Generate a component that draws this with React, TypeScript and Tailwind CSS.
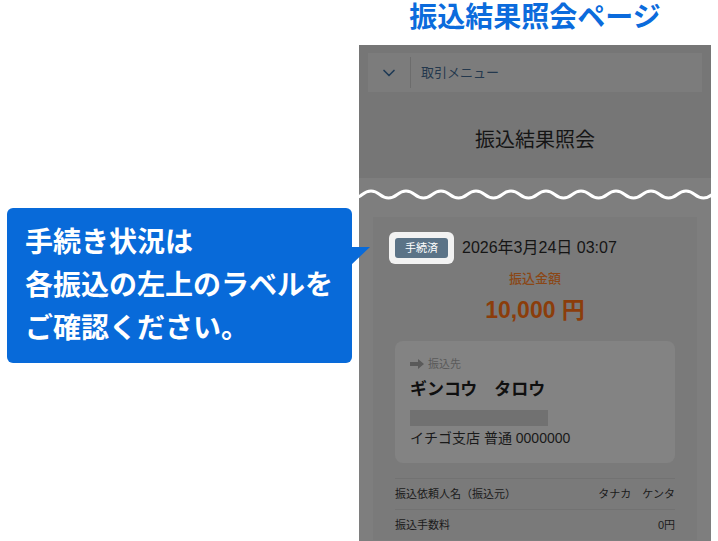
import { ChevronDown } from 'lucide-react'

const FONT = "font-['Liberation_Sans','Noto_Sans_CJK_JP',sans-serif]"

// smooth sine-like line used to mark the cut between header and body
function WaveLine() {
  const half = 17.5
  let d = `M ${12 - 35} 3`
  for (let x = 12 - 35, up = true; x < 360; x += half, up = !up) {
    const y0 = up ? 3 : 10
    const y1 = up ? 10 : 3
    d += ` C ${x + half / 2} ${y0} ${x + half / 2} ${y1} ${x + half} ${y1}`
  }
  return (
    <svg width="352" height="13" viewBox="0 0 352 13" className="block">
      <path d={d} fill="none" stroke="#ffffff" strokeWidth="3" />
    </svg>
  )
}

function ArrowIcon() {
  return (
    <svg width="14" height="10" viewBox="0 0 14 10" className="block">
      <path d="M0 3 H8 V0 L14 5 L8 10 V7 H0 Z" fill="#5a5a5a" />
    </svg>
  )
}

function Callout() {
  return (
    <div className="relative w-[345px] h-[155px] bg-[#086ad9] rounded-[6px] pl-[18px] pt-[13px] text-white text-[28px] leading-[43px] font-bold">
      <p>手続き状況は</p>
      <p>各振込の左上のラベルを</p>
      <p>ご確認ください。</p>
      <svg width="20" height="19" viewBox="0 0 20 19" className="absolute left-[344px] top-[39px]">
        <path d="M0 0 H19 L0 18 Z" fill="#086ad9" />
      </svg>
    </div>
  )
}

function ResultCard() {
  return (
    <div className="mx-[14px] bg-[#7a7a7a] px-[22px] pt-[15px]">
      <div className="flex items-center -ml-[6px]">
        <div className="bg-[#f2f2f2] rounded-[6px] p-[6px]">
          <span className="flex items-center justify-center w-[53px] h-[20px] rounded-[3px] bg-[#5b7387] text-white text-[11px]">
            手続済
          </span>
        </div>
        <span className="ml-[8px] text-[16px] text-[#151515]">2026年3月24日 03:07</span>
      </div>
      <p className="mt-[6px] text-center text-[13px] leading-[18px] font-medium text-[#8a4716]">振込金額</p>
      <p className="mt-[7px] text-center text-[23px] leading-[30px] font-bold text-[#8b3d0b]">10,000 円</p>

      <div className="mt-[16px] bg-[#838383] rounded-[8px] px-[15px] pt-[15px] pb-[15px]">
        <div className="flex items-center gap-[4px] h-[16px] text-[11px] text-[#5a5a5a]">
          <ArrowIcon />
          <span>振込先</span>
        </div>
        <p className="mt-[6px] text-[17px] leading-[24px] font-bold text-[#101010]">ギンコウ　タロウ</p>
        <div className="mt-[8px] w-[138px] h-[16px] bg-[#717171]" />
        <p className="mt-[2px] text-[14px] leading-[20px] text-[#1a1a1a]">イチゴ支店 普通 0000000</p>
      </div>

      <div className="mt-[15px] text-[11px] text-[#1a1a1a]">
        <div className="flex items-center justify-between h-[31px] border-t border-[#727272]">
          <span>振込依頼人名（振込元）</span>
          <span>タナカ　ケンタ</span>
        </div>
        <div className="flex items-center justify-between h-[31px] border-t border-[#727272]">
          <span>振込手数料</span>
          <span>0円</span>
        </div>
      </div>
    </div>
  )
}

export default function App() {
  return (
    <div className={`flex w-[718px] h-[541px] overflow-hidden bg-white ${FONT}`}>
      <div className="w-[359px] shrink-0 pt-[208px] pl-[7px]">
        <Callout />
      </div>

      <div className="w-[352px] shrink-0 flex flex-col">
        <h1 className="h-[45px] pt-[4px] text-center text-[28px] leading-[28px] font-bold text-[#0b6bdc]">
          振込結果照会ページ
        </h1>

        <div className="flex-1 flex flex-col overflow-hidden bg-[#7e7e7e]">
          <div className="h-[133px] shrink-0 bg-[#767676] pt-[8px]">
            <div className="mx-[9px] h-[39px] bg-[#7c7c7c] flex items-center">
              <div className="w-[43px] h-[31px] flex items-center justify-center border-r border-[#6c6c6c]">
                <ChevronDown size={20} strokeWidth={2} color="#1f3a55" />
              </div>
              <span className="ml-[10px] text-[13px] text-[#24384d]">取引メニュー</span>
            </div>
            <p className="mt-[36px] text-center text-[20px] leading-[24px] text-[#151515]">振込結果照会</p>
          </div>

          <div className="mt-[10px]">
            <WaveLine />
          </div>

          <div className="mt-[16px]">
            <ResultCard />
          </div>
        </div>
      </div>
    </div>
  )
}
